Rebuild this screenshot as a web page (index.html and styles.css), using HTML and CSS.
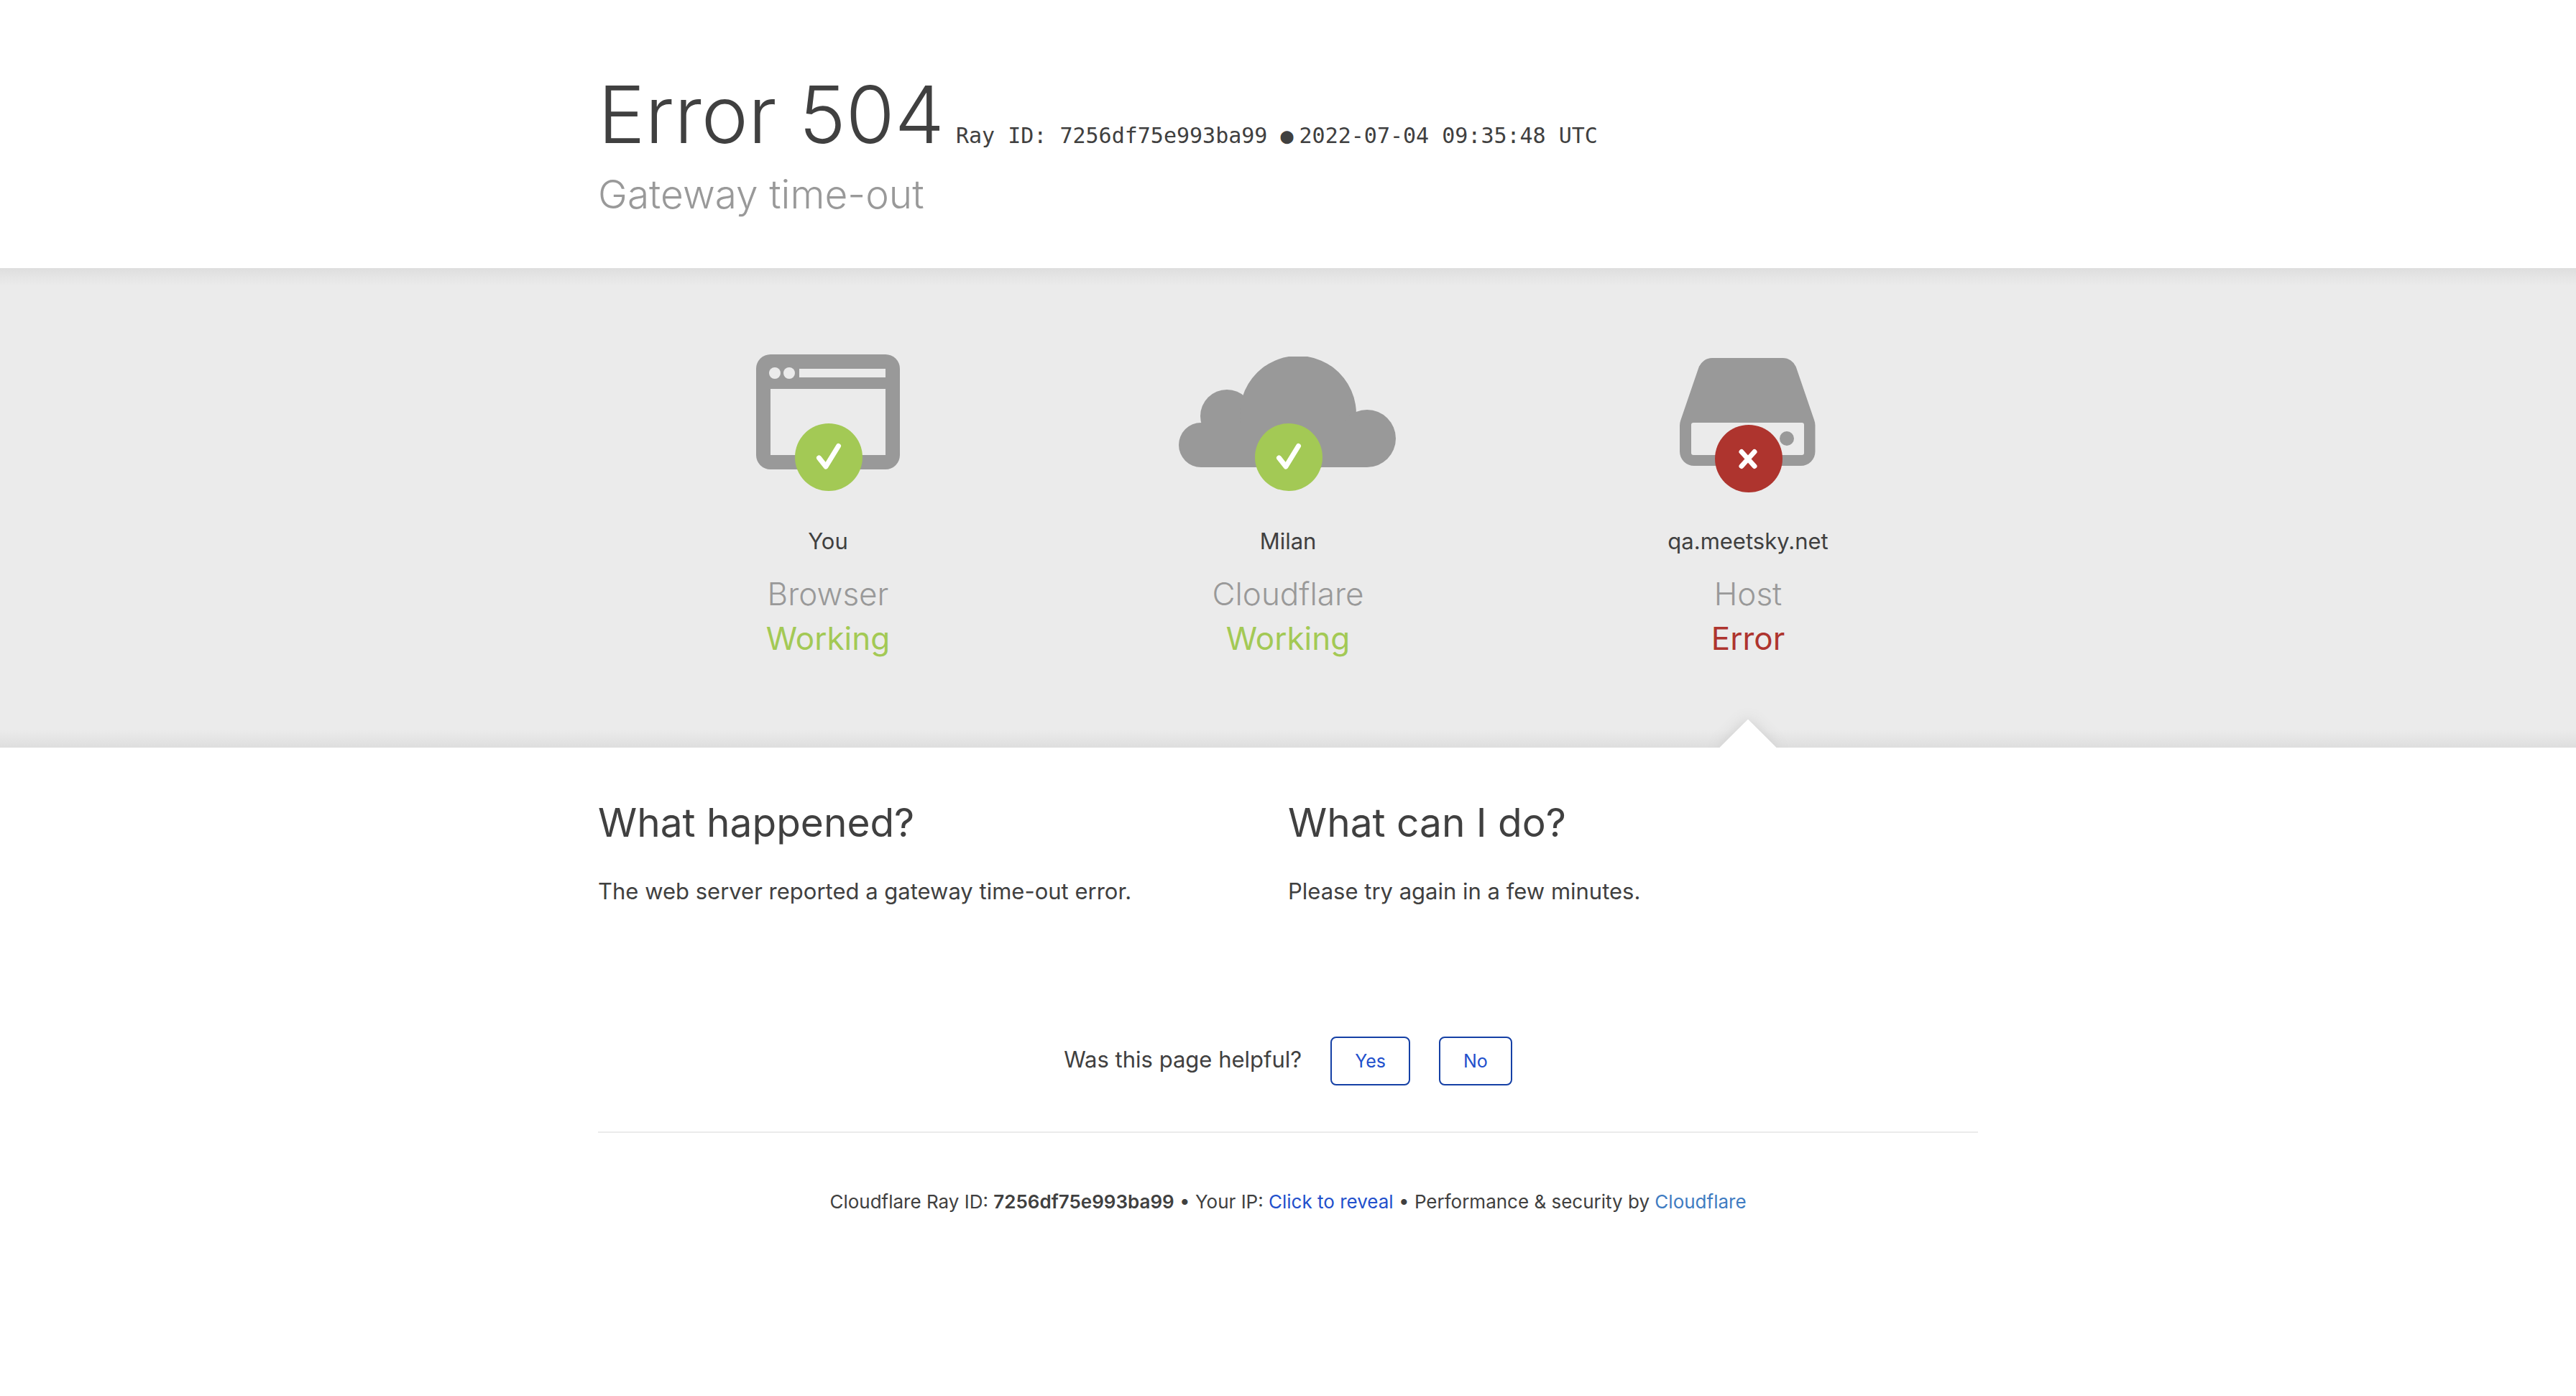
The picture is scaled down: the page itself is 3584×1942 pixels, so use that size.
FILE: index.html
```
<!DOCTYPE html>
<html lang="en">
<head>
<meta charset="utf-8">
<meta name="viewport" content="width=device-width, initial-scale=1">
<title>qa.meetsky.net | 504: Gateway time-out</title>
<link rel="stylesheet" href="styles.css">
</head>
<body>
<header class="page-header wrap">
  <div class="headline">
    <h1 class="title">Error 504</h1>
    <p class="ray">Ray ID: 7256df75e993ba99 <span class="dot">●</span>2022-07-04 09:35:48 UTC</p>
  </div>
  <p class="subtitle">Gateway time-out</p>
</header>

<section class="status-band">
  <div class="wrap status-grid">
    <div class="status">
      <svg class="status-icon" viewBox="0 0 320 200" aria-hidden="true">
        <path fill="#999" fill-rule="evenodd" d="M80 0h160a20 20 0 0 1 20 20v120a20 20 0 0 1-20 20H80a20 20 0 0 1-20-20V20a20 20 0 0 1 20-20zM80 48v92h160V48zM120 20v12h120V20z"/>
        <circle cx="86" cy="26" r="8" fill="#ebebeb"/>
        <circle cx="106" cy="26" r="8" fill="#ebebeb"/>
        <circle cx="161" cy="143" r="47" fill="#a3c955"/>
        <path d="M147.500 144l9.500 12 17.500-28.500" fill="none" stroke="#fff" stroke-width="7" stroke-linecap="round" stroke-linejoin="round"/>
      </svg>
      <span class="place">You</span>
      <h2 class="role">Browser</h2>
      <span class="state ok">Working</span>
    </div>
    <div class="status">
      <svg class="status-icon" viewBox="0 0 320 200" aria-hidden="true">
        <g fill="#999">
          <circle cx="39" cy="126" r="31"/>
          <circle cx="75" cy="86" r="37"/>
          <path d="M161 3h26a81 81 0 1 1-26 0z"/>
          <circle cx="270" cy="117" r="40"/>
          <path d="M39 95h231v62H39z"/>
        </g>
        <circle cx="161" cy="143" r="47" fill="#a3c955"/>
        <path d="M147.500 144l9.500 12 17.500-28.500" fill="none" stroke="#fff" stroke-width="7" stroke-linecap="round" stroke-linejoin="round"/>
      </svg>
      <span class="place">Milan</span>
      <h2 class="role">Cloudflare</h2>
      <span class="state ok">Working</span>
    </div>
    <div class="status current">
      <svg class="status-icon" viewBox="0 0 320 200" aria-hidden="true">
        <path fill="#999" fill-rule="evenodd" d="M110 5h98a20 20 0 0 1 19 13l25 73q1.500 4 1.500 8v36a20 20 0 0 1-20 20H85a20 20 0 0 1-20-20V99q0-4 1.500-8l25-73a20 20 0 0 1 18.500-13zM84 95a3 3 0 0 0-3 3v39a3 3 0 0 0 3 3h151a3 3 0 0 0 3-3V98a3 3 0 0 0-3-3z"/>
        <circle cx="214" cy="117" r="10" fill="#999"/>
        <circle cx="161" cy="145" r="47" fill="#ae342e"/>
        <path d="M151 135.500l18 20m0-20l-18 20" fill="none" stroke="#fff" stroke-width="7" stroke-linecap="round"/>
      </svg>
      <span class="place">qa.meetsky.net</span>
      <h2 class="role">Host</h2>
      <span class="state bad">Error</span>
    </div>
  </div>
</section>

<main class="wrap">
  <div class="details">
    <section>
      <h2 class="question">What happened?</h2>
      <p class="answer">The web server reported a gateway time-out error.</p>
    </section>
    <section>
      <h2 class="question">What can I do?</h2>
      <p class="answer">Please try again in a few minutes.</p>
    </section>
  </div>
  <div class="feedback">
    <span class="prompt">Was this page helpful?</span>
    <button class="btn" type="button">Yes</button>
    <button class="btn" type="button">No</button>
  </div>
</main>

<footer class="page-footer wrap">
  Cloudflare Ray ID: <strong>7256df75e993ba99</strong> • Your IP: <a class="reveal" href="#">Click to reveal</a> • Performance &amp; security by <a class="brand" href="#">Cloudflare</a>
</footer>
</body>
</html>
```
FILE: styles.css
```
*, *::before, *::after { box-sizing: border-box; }

body {
  margin: 0;
  background: #fff;
  color: #404040;
  font-family: Inter, "Liberation Sans", sans-serif;
  font-size: 31px;
  line-height: 44px;
}

h1, h2, p { margin: 0; font-weight: 400; }
a { text-decoration: none; }
strong { font-weight: 600; }

.wrap {
  width: 100%;
  max-width: 1920px;
  margin: 0 auto;
}

.page-header { padding: 86px 0 65px; }

.headline {
  display: flex;
  flex-wrap: wrap;
  align-items: baseline;
  column-gap: 16px;
}

.title {
  font-size: 110px;
  font-weight: 300;
  line-height: 146px;
}

.ray {
  font-family: "DejaVu Sans Mono", monospace;
  font-size: 30px;
}

.dot { margin-right: 8px; }

.subtitle {
  color: #999;
  font-size: 55px;
  font-weight: 300;
  line-height: 76px;
}

.status-band {
  background:
    linear-gradient(to bottom, #dedede, #ebebeb) top / 100% 24px no-repeat,
    linear-gradient(to top, #dedede, #ebebeb) bottom / 100% 24px no-repeat,
    #ebebeb;
  overflow: hidden;
}

.status-grid {
  display: grid;
  grid-template-columns: repeat(3, 1fr);
}

.status {
  display: flex;
  flex-direction: column;
  align-items: center;
  padding: 120px 0 121px;
  position: relative;
}

.current::after {
  content: "";
  position: absolute;
  bottom: -28px;
  left: calc(50% - 28px);
  width: 56px;
  height: 56px;
  background: #fff;
  box-shadow: 0 0 20px #ccc;
  transform: rotate(45deg);
}

.status-icon { width: 320px; height: 200px; }
.place { margin-top: 38px; }

.role {
  margin-top: 20px;
  color: #999;
  font-size: 44px;
  font-weight: 300;
  line-height: 62px;
}

.state { font-size: 44px; line-height: 62px; }
.ok { color: #a3c955; }
.bad { color: #ae342e; }

.details {
  display: grid;
  grid-template-columns: repeat(2, 1fr);
  padding-top: 66px;
}

.question { font-size: 55px; line-height: 76px; }
.answer { margin-top: 36px; }

.feedback {
  display: flex;
  align-items: baseline;
  justify-content: center;
  gap: 40px;
  margin-top: 180px;
  padding-bottom: 64px;
  border-bottom: 2px solid #ebebeb;
}

.btn {
  height: 68px;
  padding: 0 32px;
  border: 2px solid #1540a5;
  border-radius: 8px;
  background: #fff;
  color: #2250cc;
  font: inherit;
  font-size: 25px;
}

.page-footer {
  padding: 74px 0;
  font-size: 26px;
  text-align: center;
}

.reveal { color: #2250cc; }
.brand { color: #407cc2; }
```
